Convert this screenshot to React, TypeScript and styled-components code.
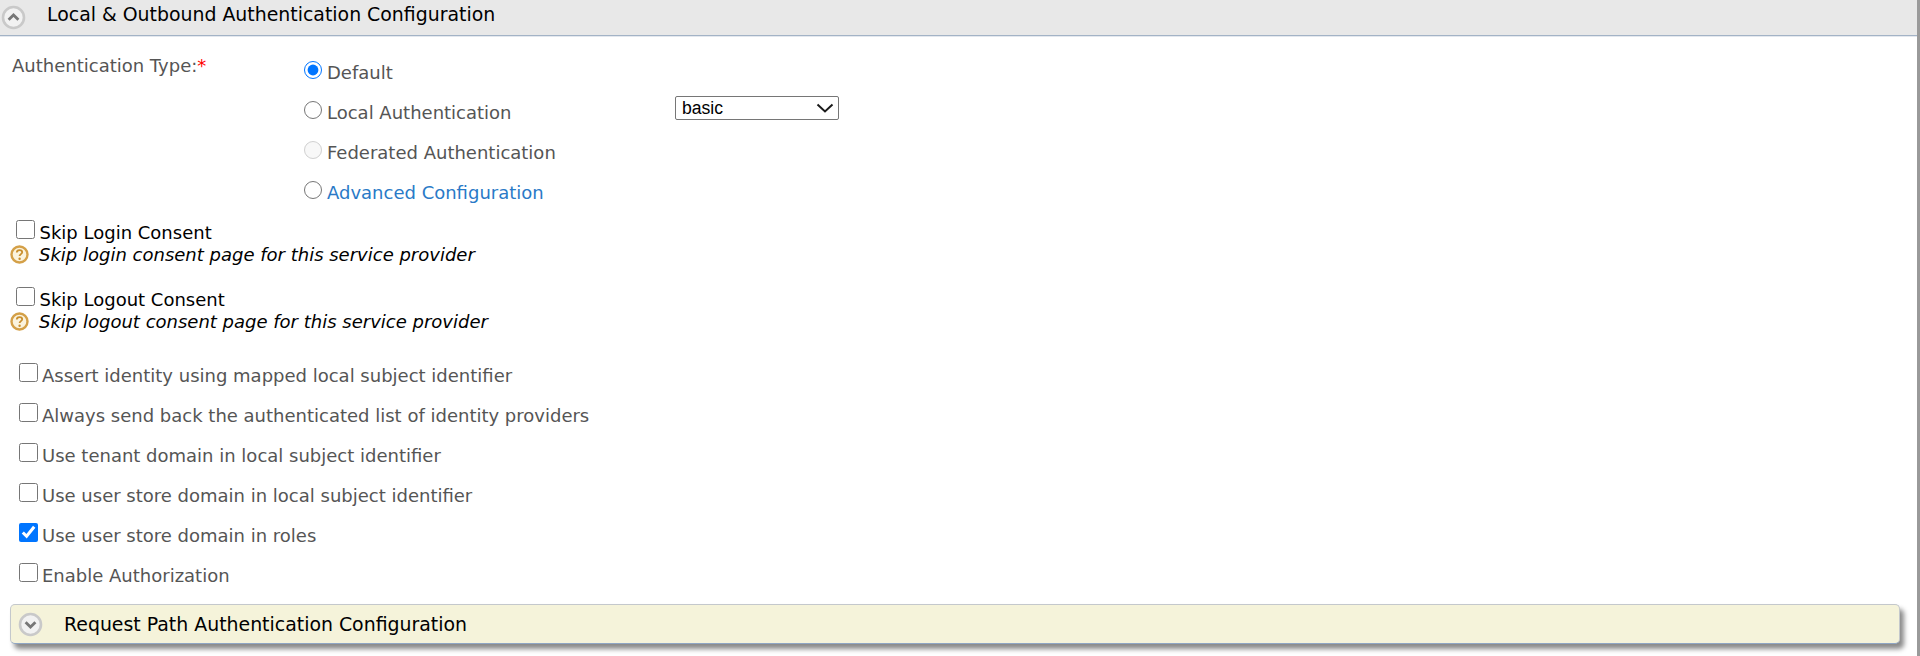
import React from "react";
import styled, { createGlobalStyle } from "styled-components";

const Global = createGlobalStyle`
  html, body { margin: 0; padding: 0; background: #fff; overflow: hidden; }
  body { font-family: "DejaVu Sans", Verdana, sans-serif; }
`;

const Page = styled.div`
  width: 1917px;
  height: 656px;
  background: #fff;
  box-shadow: 3px 0 0 #9a9a9a;
  overflow: hidden;
`;

const SectionHeader = styled.div`
  height: 35px;
  background: #e8e8e8;
  border-bottom: 1px solid #a3b3c6;
  box-shadow: 0 1px 0 #e4e8ee;
  display: flex;
  align-items: center;
  padding-left: 1px;
  color: #000;
  font-size: 18.9px;
  line-height: 28px;
`;

const PanelTitle = styled.span<{ $raise?: number }>`
  margin-left: 21px;
  margin-bottom: ${(p) => p.$raise ?? 0}px;
  white-space: nowrap;
`;

const ToggleCircle = styled.svg`
  flex: none;
  width: 25px;
  height: 25px;
`;

const Body = styled.div`
  padding: 0 0 0 10px;
`;

const AuthGrid = styled.div`
  display: grid;
  grid-template-columns: 294px 371px auto;
  align-items: start;
  padding-top: 17.5px;
`;

const FieldLabel = styled.label`
  font-size: 18px;
  line-height: 24px;
  color: #555;
  padding-left: 2px;
  white-space: nowrap;
`;

const Required = styled.span`
  color: #ff0000;
`;

const RadioStack = styled.div`
  display: flex;
  flex-direction: column;
  gap: 16px;
  padding-top: 7px;
`;

const RadioRow = styled.label<{ $link?: boolean }>`
  height: 24px;
  display: flex;
  align-items: flex-start;
  font-size: 18px;
  line-height: 24px;
  color: ${(p) => (p.$link ? "#2a7ac7" : "#555")};
  white-space: nowrap;
`;

const Radio = styled.input.attrs({ type: "radio", name: "authType" })`
  width: 18px;
  height: 18px;
  margin: 0 5px 0 0;
  flex: none;
`;

const SelectCell = styled.div`
  padding-top: 42.5px;
`;

const SelectWrap = styled.div`
  position: relative;
  width: 164px;
  height: 24px;
`;

const AuthSelect = styled.select`
  appearance: none;
  display: block;
  box-sizing: border-box;
  width: 100%;
  height: 100%;
  font-family: "Liberation Sans", Arial, sans-serif;
  font-size: 17.6px;
  color: #000;
  background: #fff;
  border: 1px solid #767676;
  border-radius: 2px;
  padding: 0 0 0 6px;
`;

const SelectChevron = styled.svg`
  position: absolute;
  top: 7px;
  right: 5px;
  width: 18px;
  height: 10px;
  pointer-events: none;
`;

const ConsentBlock = styled.div<{ $gap: number }>`
  margin-top: ${(p) => p.$gap}px;
`;

const ConsentRow = styled.label`
  display: flex;
  align-items: flex-start;
  height: 24px;
  padding-left: 6px;
  font-size: 18px;
  line-height: 24px;
  color: #000;
  white-space: nowrap;
`;

const Check = styled.input.attrs({ type: "checkbox" })`
  width: 19px;
  height: 19px;
  margin: -1px 4.5px 0 0;
  flex: none;
`;

const HelpRow = styled.div`
  display: flex;
  align-items: center;
  height: 20px;
  margin-top: -1px;
  font-size: 18px;
  font-style: italic;
  color: #000;
  white-space: nowrap;
`;

const HelpIcon = styled.svg`
  flex: none;
  width: 19px;
  height: 19px;
  margin-right: 10px;
`;

const OptionStack = styled.div`
  display: flex;
  flex-direction: column;
  gap: 16px;
  margin-top: 33px;
  padding-left: 8.5px;
`;

const OptionRow = styled.label`
  display: flex;
  align-items: flex-start;
  height: 24px;
  font-size: 18px;
  line-height: 24px;
  color: #555;
  white-space: nowrap;
`;

const SubPanel = styled.div`
  margin-top: 16px;
  width: 1890px;
  height: 40px;
  box-sizing: border-box;
  background: #f5f3da;
  border: 1px solid #c4c8cc;
  border-bottom-color: #8fa6c4;
  border-radius: 5px;
  box-shadow: 4px 5px 5px #8a8a8a;
  display: flex;
  align-items: center;
  padding-left: 7px;
  color: #000;
  font-size: 18.9px;
  line-height: 28px;
`;

function Toggle({ up }: { up: boolean }) {
  return (
    <ToggleCircle viewBox="0 0 25 25">
      <circle cx="12.5" cy="12.5" r="10.5" fill="#f2f2f2" stroke="#c9c9c9" strokeWidth="2.6" />
      <path
        d={up ? "M7.6 14.8 12.5 9.9l4.9 4.9" : "M7.6 10.2 12.5 15.1l4.9-4.9"}
        fill="none"
        stroke="#777"
        strokeWidth="2.8"
      />
    </ToggleCircle>
  );
}

function Help() {
  return (
    <HelpIcon viewBox="0 0 19 19">
      <circle cx="9.5" cy="9.5" r="8" fill="#fbf3dd" stroke="#d4a048" strokeWidth="2.4" />
      <path d="M6.8 7.6c0-1.6 1.2-2.5 2.8-2.5s2.6 1 2.6 2.2c0 1.8-2.6 1.9-2.6 3.8" fill="none" stroke="#c98f2e" strokeWidth="1.8" />
      <circle cx="9.6" cy="13.8" r="1.2" fill="#c98f2e" />
    </HelpIcon>
  );
}

const options = [
  { text: "Assert identity using mapped local subject identifier" },
  { text: "Always send back the authenticated list of identity providers" },
  { text: "Use tenant domain in local subject identifier" },
  { text: "Use user store domain in local subject identifier" },
  { text: "Use user store domain in roles", checked: true },
  { text: "Enable Authorization" },
];

export default function App() {
  return (
    <Page>
      <Global />
      <SectionHeader>
        <Toggle up />
        <PanelTitle $raise={7}>Local &amp; Outbound Authentication Configuration</PanelTitle>
      </SectionHeader>
      <Body>
        <AuthGrid>
          <FieldLabel>
            Authentication Type:<Required>*</Required>
          </FieldLabel>
          <RadioStack>
            <RadioRow><Radio defaultChecked />Default</RadioRow>
            <RadioRow><Radio />Local Authentication</RadioRow>
            <RadioRow><Radio disabled />Federated Authentication</RadioRow>
            <RadioRow $link><Radio />Advanced Configuration</RadioRow>
          </RadioStack>
          <SelectCell>
            <SelectWrap>
              <AuthSelect defaultValue="basic">
                <option value="basic">basic</option>
              </AuthSelect>
              <SelectChevron viewBox="0 0 18 10">
                <path d="M1.5 1.5 9 8.5l7.5-7" fill="none" stroke="#1a1a1a" strokeWidth="2" />
              </SelectChevron>
            </SelectWrap>
          </SelectCell>
        </AuthGrid>
        <ConsentBlock $gap={16.5}>
          <ConsentRow><Check />Skip Login Consent</ConsentRow>
          <HelpRow><Help />Skip login consent page for this service provider</HelpRow>
        </ConsentBlock>
        <ConsentBlock $gap={24}>
          <ConsentRow><Check />Skip Logout Consent</ConsentRow>
          <HelpRow><Help />Skip logout consent page for this service provider</HelpRow>
        </ConsentBlock>
        <OptionStack>
          {options.map((o) => (
            <OptionRow key={o.text}>
              <Check defaultChecked={o.checked} />
              {o.text}
            </OptionRow>
          ))}
        </OptionStack>
        <SubPanel>
          <Toggle up={false} />
          <PanelTitle>Request Path Authentication Configuration</PanelTitle>
        </SubPanel>
      </Body>
    </Page>
  );
}
